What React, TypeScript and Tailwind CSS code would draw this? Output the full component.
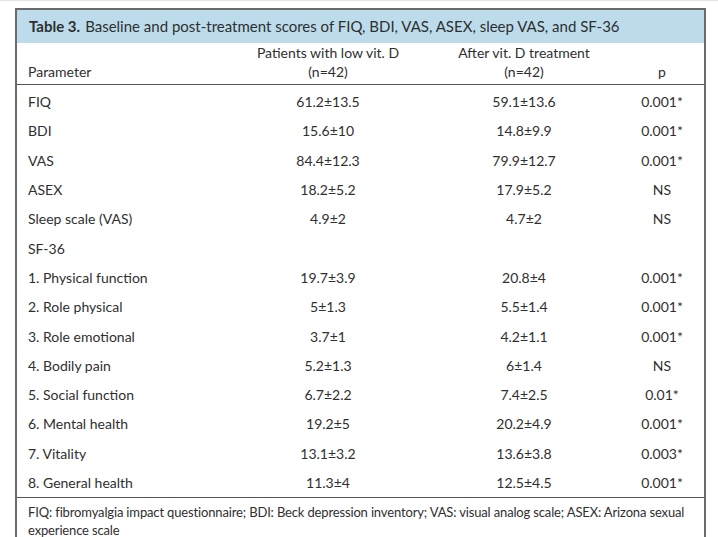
import React from "react";

const rows: Array<[string, string, string, string]> = [
  ["FIQ", "61.2±13.5", "59.1±13.6", "0.001*"],
  ["BDI", "15.6±10", "14.8±9.9", "0.001*"],
  ["VAS", "84.4±12.3", "79.9±12.7", "0.001*"],
  ["ASEX", "18.2±5.2", "17.9±5.2", "NS"],
  ["Sleep scale (VAS)", "4.9±2", "4.7±2", "NS"],
  ["SF-36", "", "", ""],
  ["1. Physical function", "19.7±3.9", "20.8±4", "0.001*"],
  ["2. Role physical", "5±1.3", "5.5±1.4", "0.001*"],
  ["3. Role emotional", "3.7±1", "4.2±1.1", "0.001*"],
  ["4. Bodily pain", "5.2±1.3", "6±1.4", "NS"],
  ["5. Social function", "6.7±2.2", "7.4±2.5", "0.01*"],
  ["6. Mental health", "19.2±5", "20.2±4.9", "0.001*"],
  ["7. Vitality", "13.1±3.2", "13.6±3.8", "0.003*"],
  ["8. General health", "11.3±4", "12.5±4.5", "0.001*"],
];

export default function App() {
  return (
    <div
      className="w-[718px] h-[537px] overflow-hidden bg-white border-t border-[#e4e4e4] text-[#2f2f2f]"
      style={{ fontFamily: "Lato, 'Open Sans', sans-serif" }}
    >
      <div className="ml-[15px] mt-[7px] w-[691px] h-[600px] border-l-2 border-r-2 border-t-2 border-[#6b6b6b]">
        {/* title */}
        <div className="h-[33px] bg-[#bcdcec] flex items-center pl-[12px] text-[15px]">
          <span className="font-bold mr-[5px]">Table 3.</span>
          <span>Baseline and post-treatment scores of FIQ, BDI, VAS, ASEX, sleep VAS, and SF-36</span>
        </div>

        {/* head */}
        <div className="h-[42px] flex items-end pb-[3px] border-b border-[#555] text-[14px] leading-[19px]">
          <div className="w-[213px] pl-[11px]">Parameter</div>
          <div className="w-[196px] text-center">
            Patients with low vit. D
            <br />
            (n=42)
          </div>
          <div className="w-[196px] text-center">
            After vit. D treatment
            <br />
            (n=42)
          </div>
          <div className="flex-1 text-center pr-[2px]">p</div>
        </div>

        {/* body */}
        <div className="pt-[2px] text-[14px] border-b border-[#555]">
          {rows.map(([name, a, b, p]) => (
            <div key={name} className="h-[29.3px] flex items-center">
              <div className="w-[213px] pl-[11px]">{name}</div>
              <div className="w-[196px] text-center">{a}</div>
              <div className="w-[196px] text-center">{b}</div>
              <div className="flex-1 text-center pr-[2px]">{p}</div>
            </div>
          ))}
        </div>

        {/* note */}
        <div className="pl-[11px] pt-[5px] text-[13px] leading-[18px] tracking-[-0.15px]">
          <div className="whitespace-nowrap">
            FIQ: fibromyalgia impact questionnaire; BDI: Beck depression inventory; VAS: visual analog scale; ASEX: Arizona sexual
          </div>
          <div>experience scale</div>
        </div>
      </div>
    </div>
  );
}
